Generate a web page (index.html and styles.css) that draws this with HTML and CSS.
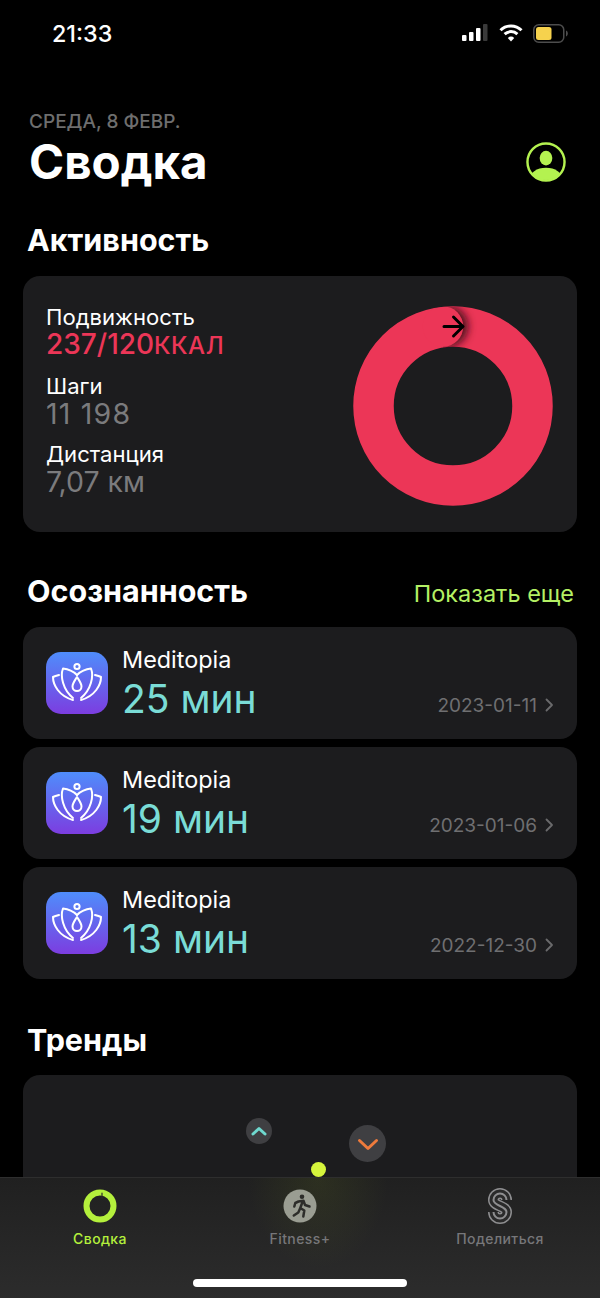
FILE: index.html
```html
<!DOCTYPE html>
<html>
<head>
    <title>Сводка</title>
    <link rel="stylesheet" href="styles.css">
</head>
<body>
    <div class="screen">
        <div class="status-bar">
            <span class="time">21:33</span>
            <div class="status-icons">
                <svg width="27" height="18" viewBox="0 0 27 18">
                    <rect x="0" y="11" width="4.5" height="6" rx="1" fill="#fff"/>
                    <rect x="7" y="8" width="4.5" height="9" rx="1" fill="#fff"/>
                    <rect x="14" y="4" width="4.5" height="13" rx="1" fill="#fff"/>
                    <rect x="21" y="0" width="4.5" height="17" rx="1" fill="#3a3a3a"/>
                </svg>
                <svg width="24" height="18" viewBox="0 0 24 18" fill="none" stroke="#fff" stroke-width="3">
                    <path d="M1.5 6.2a15 15 0 0 1 21 0"/>
                    <path d="M5.6 10.2a9.2 9.2 0 0 1 12.8 0"/>
                    <path d="M12 17.5l-3.2-3.6a4.6 4.6 0 0 1 6.4 0z" fill="#fff" stroke="none"/>
                </svg>
                <svg width="35" height="19" viewBox="0 0 35 19">
                    <rect x="0.75" y="0.75" width="30" height="17.5" rx="5" fill="none" stroke="#4d4d4d" stroke-width="1.5"/>
                    <rect x="3" y="3" width="15.5" height="13" rx="2.5" fill="#f6d24d"/>
                    <path d="M33 6.5c1.2.4 1.8 1.6 1.8 3s-.6 2.6-1.8 3z" fill="#4d4d4d"/>
                </svg>
            </div>
        </div>

        <div class="header">
            <div>
                <div class="date">СРЕДА, 8 ФЕВР.</div>
                <h1 class="title">Сводка</h1>
            </div>
            <svg class="avatar" width="40" height="40" viewBox="0 0 41 41">
                <defs>
                    <clipPath id="avatarClip"><circle cx="20.5" cy="20.5" r="18.5"/></clipPath>
                </defs>
                <circle cx="20.5" cy="20.5" r="19" fill="none" stroke="#b4f250" stroke-width="2.5"/>
                <ellipse cx="20.5" cy="16.5" rx="6.500" ry="7.500" fill="#b4f250"/>
                <ellipse cx="20.5" cy="38" rx="17" ry="11.5" fill="#b4f250" clip-path="url(#avatarClip)"/>
            </svg>
        </div>

        <h2 class="section-title activity-title">Активность</h2>
        <div class="card activity-card">
            <div class="stats">
                <div class="stat">
                    <div class="stat-name">Подвижность</div>
                    <div class="stat-value move">237/120<span class="unit">ККАЛ</span></div>
                </div>
                <div class="stat">
                    <div class="stat-name">Шаги</div>
                    <div class="stat-value steps">11 198</div>
                </div>
                <div class="stat">
                    <div class="stat-name">Дистанция</div>
                    <div class="stat-value">7,07 км</div>
                </div>
            </div>
            <svg class="ring" width="200" height="200" viewBox="0 0 200 200">
                <defs>
                    <filter id="capBlur" x="-50%" y="-50%" width="200%" height="200%">
                        <feGaussianBlur stdDeviation="4"/>
                    </filter>
                    <clipPath id="ringClip">
                        <path clip-rule="evenodd" d="M100 .5a99.5 99.5 0 1 0 0 199a99.5 99.5 0 1 0 0-199zM100 41a59 59 0 1 1 0 118a59 59 0 1 1 0-118z"/>
                    </clipPath>
                    <clipPath id="shadowClip">
                        <rect x="90" y="0" width="60" height="60"/>
                    </clipPath>
                </defs>
                <circle cx="100" cy="100" r="79.5" fill="none" stroke="#ec3657" stroke-width="40.5"/>
                <g clip-path="url(#ringClip)">
                    <g clip-path="url(#shadowClip)">
                        <circle cx="95" cy="20.5" r="20" fill="#4a0c1a" filter="url(#capBlur)"/>
                    </g>
                    <circle cx="90" cy="20.5" r="20.250" fill="#ec3657"/>
                </g>
                <path d="M91 20.5h18.500M100.500 11l9.500 9.500l-9.500 9.500" fill="none" stroke="#000" stroke-width="3" stroke-linecap="round" stroke-linejoin="round"/>
            </svg>
        </div>

        <div class="section-head">
            <h2 class="section-title">Осознанность</h2>
            <span class="show-more">Показать еще</span>
        </div>
        <div class="sessions">
            <div class="card session">
                <svg class="app-icon" viewBox="0 0 62 62"><use href="#lotus"/></svg>
                <div class="session-text">
                    <div class="app-name">Meditopia</div>
                    <div class="minutes">25 мин</div>
                </div>
                <div class="session-date">2023-01-11 <svg class="chevron" width="9" height="14" viewBox="0 0 9 14"><path d="M1.5 1.5L7 7l-5.5 5.5"/></svg></div>
            </div>
            <div class="card session">
                <svg class="app-icon" viewBox="0 0 62 62"><use href="#lotus"/></svg>
                <div class="session-text">
                    <div class="app-name">Meditopia</div>
                    <div class="minutes">19 мин</div>
                </div>
                <div class="session-date">2023-01-06 <svg class="chevron" width="9" height="14" viewBox="0 0 9 14"><path d="M1.5 1.5L7 7l-5.5 5.5"/></svg></div>
            </div>
            <div class="card session">
                <svg class="app-icon" viewBox="0 0 62 62"><use href="#lotus"/></svg>
                <div class="session-text">
                    <div class="app-name">Meditopia</div>
                    <div class="minutes">13 мин</div>
                </div>
                <div class="session-date">2022-12-30 <svg class="chevron" width="9" height="14" viewBox="0 0 9 14"><path d="M1.5 1.5L7 7l-5.5 5.5"/></svg></div>
            </div>
        </div>

        <h2 class="section-title trends-title">Тренды</h2>
        <div class="card trends-card">
            <div class="trend trend-up">
                <svg width="16" height="10" viewBox="0 0 16 10"><path d="M2 8l6-5.5L14 8" stroke="#6fd9cf"/></svg>
            </div>
            <div class="trend trend-down">
                <svg width="22" height="14" viewBox="0 0 22 14"><path d="M2.5 3.500l8.500 8l8.500-8" stroke="#ef7b3c"/></svg>
            </div>
            <div class="trend-dot"></div>
        </div>

        <div class="tab-bar">
            <div class="tab active">
                <svg class="tab-icon" width="36" height="36" viewBox="0 0 36 36">
                    <circle cx="18" cy="18" r="13.5" fill="none" stroke="#b4f03c" stroke-width="6"/>
                    <path d="M20 5v5.500" stroke="#2a2a2a" stroke-width="1.2" stroke-linecap="round"/>
                </svg>
                <span>Сводка</span>
            </div>
            <div class="tab">
                <svg class="tab-icon" width="36" height="36" viewBox="0 0 36 36">
                    <circle cx="18" cy="18" r="16.500" fill="#9a9d92"/>
                    <circle cx="20" cy="8.800" r="2.300" fill="#2d2d2a"/>
                    <path d="M16.500 13.500l5-.8l1.500 4.300l4.500 1.500M20.800 13l-2.500 7l4 2.500l-1 6M18.300 20l-2 4.500l-4.500 3M16.500 13.500l-3.200 1.500l-1 3.500" fill="none" stroke="#2d2d2a" stroke-width="2.500" stroke-linecap="round" stroke-linejoin="round"/>
                </svg>
                <span>Fitness+</span>
            </div>
            <div class="tab">
                <svg class="tab-icon" width="24" height="36" viewBox="0 0 24 36" fill="none">
                    <path class="s1" d="M18.500 12A6.500 6.500 0 0 0 5.500 12C5.500 18 18.500 18 18.500 24A6.500 6.500 0 0 1 5.500 24"/>
                    <path class="s2" d="M18.500 12A6.500 6.500 0 0 0 5.500 12C5.500 18 18.500 18 18.500 24A6.500 6.500 0 0 1 5.500 24"/>
                    <path class="s3" d="M18.500 12A6.500 6.500 0 0 0 5.500 12C5.500 18 18.500 18 18.500 24A6.500 6.500 0 0 1 5.500 24"/>
                </svg>
                <span>Поделиться</span>
            </div>
            <div class="home-indicator"></div>
        </div>
    </div>

    <svg class="sprite" width="0" height="0">
        <defs>
            <linearGradient id="iconBg" x1="0" y1="0" x2="0" y2="1">
                <stop offset="0" stop-color="#4f8dfb"/>
                <stop offset="1" stop-color="#7c3de0"/>
            </linearGradient>
            <g id="lotus">
                <rect width="62" height="62" rx="15" fill="url(#iconBg)"/>
                <g fill="none" stroke="#fff" stroke-width="2" stroke-linecap="round" stroke-linejoin="round">
                    <circle cx="31" cy="14.5" r="2.6"/>
                    <path d="M31 25c-2.500 4-4.500 6.500-4.500 9.500a4.500 4.500 0 0 0 9 0c0-3-2-5.500-4.500-9.500z"/>
                    <path d="M31 23C27 19 22 17 17 16.500C14 24 17 38 27 46"/>
                    <path d="M31 23C35 19 40 17 45 16.500C48 24 45 38 35 46"/>
                    <path d="M13 23C11 23.500 9 24 7 25C7 33 13 44 27 48"/>
                    <path d="M49 23C51 23.500 53 24 55 25C55 33 49 44 35 48"/>
                </g>
            </g>
        </defs>
    </svg>
</body>
</html>
```
FILE: styles.css
```css
* {
    box-sizing: border-box;
}

html, body {
    margin: 0;
    padding: 0;
    background-color: #000;
}

body {
    font-family: 'Inter', 'Roboto', sans-serif;
    color: #fff;
}

.sprite {
    display: block;
}

.screen {
    position: relative;
    width: 600px;
    height: 1298px;
    overflow: hidden;
    background-color: #000;
}

.status-bar {
    display: flex;
    justify-content: space-between;
    align-items: center;
    height: 66px;
    padding: 0 32px 0 52px;
}

.time {
    font-size: 23.3px;
    font-weight: 500;
}

.status-icons {
    display: flex;
    align-items: center;
    gap: 10px;
}

.header {
    display: flex;
    justify-content: space-between;
    align-items: flex-end;
    padding: 45px 34px 0 29px;
}

.date {
    font-size: 19px;
    font-weight: 500;
    line-height: 22px;
    color: #6e6e6e;
}

.title {
    margin: 0;
    font-size: 47.5px;
    font-weight: 700;
    line-height: 58px;
}

.avatar {
    margin-bottom: 9px;
}

.section-title {
    margin: 0;
    font-size: 30.5px;
    font-weight: 700;
    line-height: 36px;
}

.activity-title {
    margin: 31px 0 0 27px;
}

.card {
    background-color: #1c1c1e;
    border-radius: 17px;
    margin: 0 23px;
}

.activity-card {
    display: flex;
    justify-content: space-between;
    align-items: flex-start;
    height: 256px;
    margin-top: 18px;
    padding: 28px 24px 0 23px;
}

.stats {
    display: flex;
    flex-direction: column;
    gap: 14px;
}

.stat-name {
    font-size: 22.1px;
    line-height: 27px;
}

.stat-value {
    font-size: 28.5px;
    line-height: 27px;
    color: #7b7b7d;
}

.stat-value.steps {
    letter-spacing: 1.2px;
}

.stat-value.move {
    font-size: 28px;
    color: #ec3657;
    font-weight: 500;
}

.unit {
    font-size: 24px;
    letter-spacing: 0.5px;
}

.ring {
    margin-top: 2px;
}

.section-head {
    display: flex;
    justify-content: space-between;
    align-items: center;
    margin-top: 41px;
    padding: 0 26px 0 27px;
}

.show-more {
    padding-top: 4px;
    font-size: 23.5px;
    color: #b4f064;
}

.sessions {
    display: flex;
    flex-direction: column;
    gap: 8px;
    margin-top: 18px;
}

.session {
    position: relative;
    display: flex;
    align-items: center;
    height: 112px;
    padding: 0 23px;
}

.app-icon {
    width: 62px;
    height: 62px;
    flex-shrink: 0;
}

.session-text {
    margin: 2px 0 0 14px;
}

.app-name {
    font-size: 23.4px;
    line-height: 27px;
}

.minutes {
    padding-top: 2px;
    font-size: 39px;
    line-height: 48px;
    color: #7adcd6;
}

.session-date {
    display: flex;
    align-items: center;
    gap: 8px;
    margin: 44px 0 0 auto;
    font-size: 19px;
    color: #6f6f71;
}

.chevron path {
    fill: none;
    stroke: #6a6a6c;
    stroke-width: 1.8;
    stroke-linecap: round;
    stroke-linejoin: round;
}

.trends-title {
    margin: 43px 0 0 27px;
}

.trends-card {
    position: relative;
    height: 200px;
    margin-top: 17px;
}

.trend {
    position: absolute;
    display: flex;
    justify-content: center;
    align-items: center;
    border-radius: 50%;
    background-color: #3f3f42;
}

.trend svg path {
    fill: none;
    stroke-width: 3;
    stroke-linecap: round;
    stroke-linejoin: round;
}

.trend-up {
    left: 223px;
    top: 43px;
    width: 26px;
    height: 26px;
}

.trend-down {
    left: 326px;
    top: 50px;
    width: 37px;
    height: 37px;
}

.trend-dot {
    position: absolute;
    left: 288px;
    top: 87px;
    width: 15px;
    height: 15px;
    border-radius: 50%;
    background-color: #d6f53c;
}

.tab-bar {
    position: absolute;
    left: 0;
    right: 0;
    bottom: 0;
    display: grid;
    grid-template-columns: 200px 200px 200px;
    height: 121px;
    padding-top: 10px;
    border-top: 1px solid #2e2e2e;
    background:
        radial-gradient(ellipse 70px 90px at 318px 0, rgba(120, 140, 30, 0.14), transparent),
        linear-gradient(#202020, #2c2c2c);
}

.tab {
    display: flex;
    flex-direction: column;
    align-items: center;
    font-size: 14px;
    font-weight: 500;
    letter-spacing: 0.4px;
    color: #77777a;
}

.tab.active {
    color: #b4f03c;
}

.tab-icon {
    margin-bottom: 6px;
}

.s1 {
    stroke: #8e8e90;
    stroke-width: 11;
}

.s2 {
    stroke: #2a2a2a;
    stroke-width: 8;
}

.s3 {
    stroke: #8e8e90;
    stroke-width: 2;
}

.home-indicator {
    position: absolute;
    left: 193px;
    bottom: 11px;
    width: 214px;
    height: 8px;
    border-radius: 4px;
    background-color: #fff;
}
```
